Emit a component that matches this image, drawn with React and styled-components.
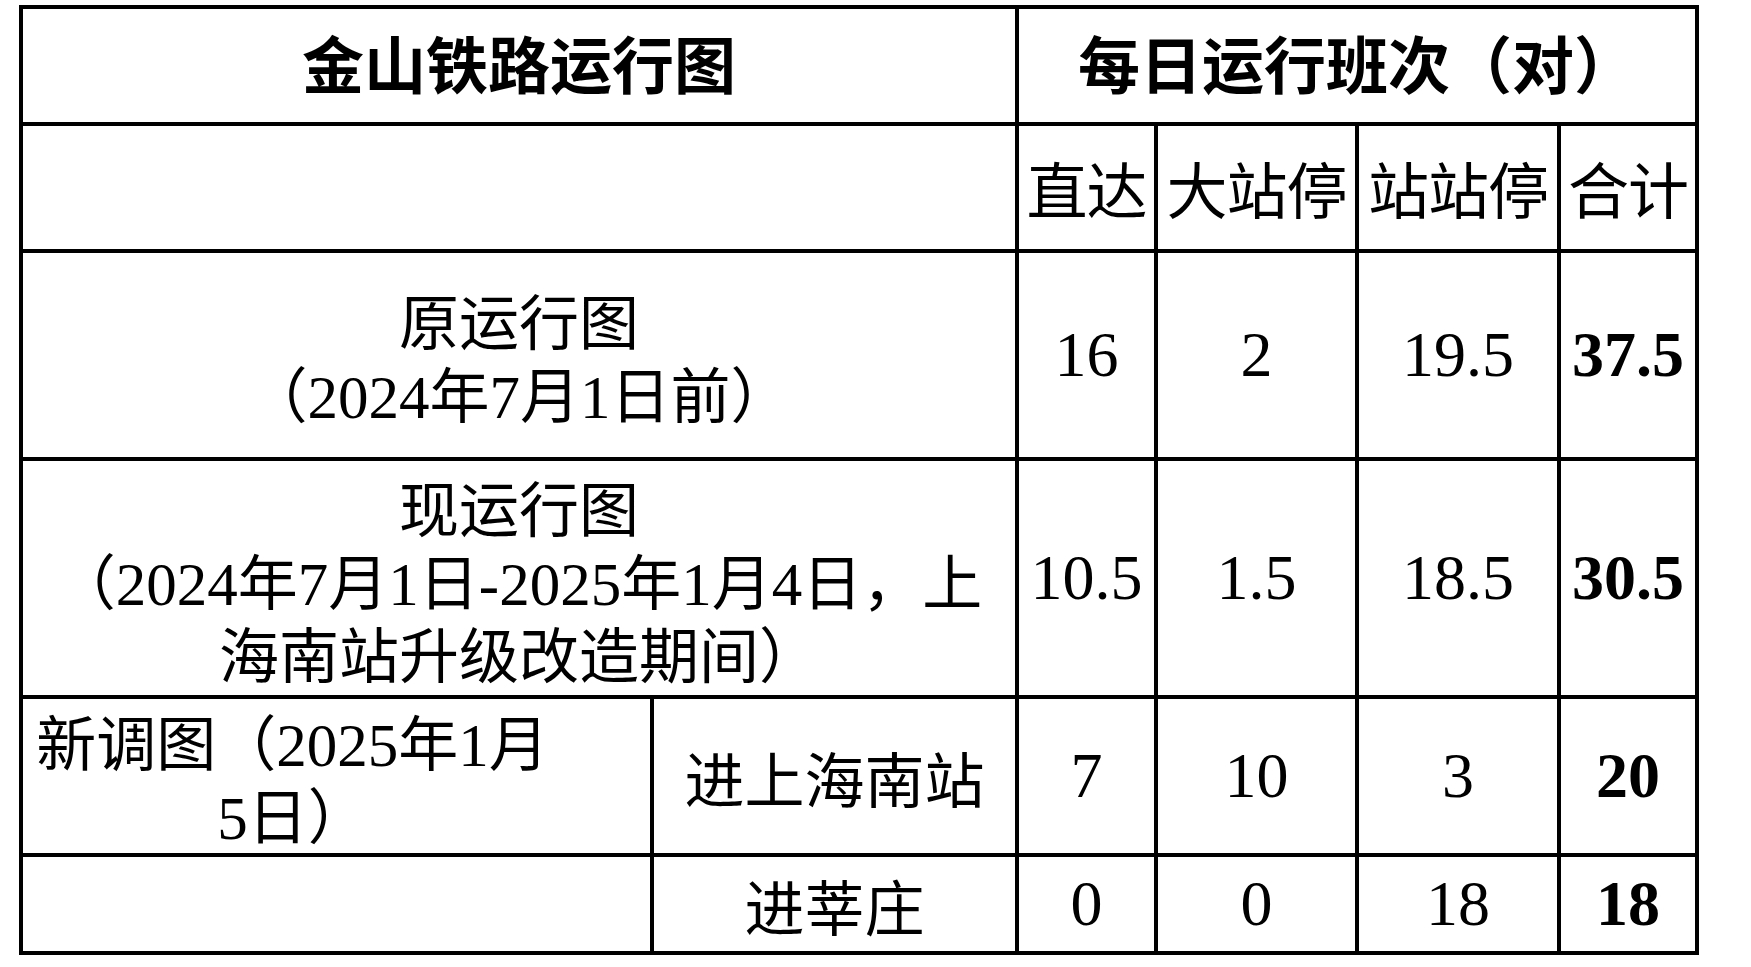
import React from 'react';
import styled, { createGlobalStyle } from 'styled-components';

const GlobalStyle = createGlobalStyle`
    html, body {
        margin: 0;
        padding: 0;
        background: #FFFFFF;
    }
`;

const columns = [631, 365, 139, 201, 202, 138];

const rows = [
    { label: ['原运行图', '（2024年7月1日前）'], values: ['16', '2', '19.5', '37.5'] },
    {
        label: ['现运行图', '（2024年7月1日-2025年1月4日，上', '海南站升级改造期间）'],
        values: ['10.5', '1.5', '18.5', '30.5'],
    },
];

// digits in the labels are set in a Times-like face, the rest in a CJK sans
const Mixed = ({ text }) =>
    text.split(/([0-9-]+)/).map((part, i) =>
        /^[0-9-]+$/.test(part) ? <Digits key={i}>{part}</Digits> : <React.Fragment key={i}>{part}</React.Fragment>
    );

const App = () => {
    return (
        <Page>
            <GlobalStyle />
            <Table>
                <colgroup>
                    {columns.map((w, i) => (
                        <col key={i} style={{ width: w }} />
                    ))}
                </colgroup>
                <tbody>
                    <Row $h={117}>
                        <TitleCell colSpan={2}>金山铁路运行图</TitleCell>
                        <TitleCell colSpan={4}>每日运行班次（对）</TitleCell>
                    </Row>
                    <Row $h={127}>
                        <Cell colSpan={2} />
                        <HeadCell>直达</HeadCell>
                        <HeadCell>大站停</HeadCell>
                        <HeadCell>站站停</HeadCell>
                        <HeadCell>合计</HeadCell>
                    </Row>
                    {rows.map((r, i) => (
                        <Row key={i} $h={i === 0 ? 208 : 238}>
                            <LabelCell colSpan={2}>
                                {r.label.map((line, j) => (
                                    <Line key={j}><Mixed text={line} /></Line>
                                ))}
                            </LabelCell>
                            {r.values.map((v, j) => (
                                <NumCell key={j} $bold={j === 3}>{v}</NumCell>
                            ))}
                        </Row>
                    ))}
                    <Row $h={158}>
                        <NewLabelCell>
                            <Line><Mixed text="新调图（2025年1月" /></Line>
                            <Line><Mixed text="5日）" /></Line>
                        </NewLabelCell>
                        <LabelCell>进上海南站</LabelCell>
                        <NumCell>7</NumCell>
                        <NumCell>10</NumCell>
                        <NumCell>3</NumCell>
                        <NumCell $bold>20</NumCell>
                    </Row>
                    <Row $h={98}>
                        <Cell />
                        <LabelCell>进莘庄</LabelCell>
                        <NumCell>0</NumCell>
                        <NumCell>0</NumCell>
                        <NumCell>18</NumCell>
                        <NumCell $bold>18</NumCell>
                    </Row>
                </tbody>
            </Table>
        </Page>
    );
};

const Page = styled.div`
    width: 1751px;
    height: 967px;
    padding: 5px 0 0 19px;
    box-sizing: border-box;
    overflow: hidden;
    background: #FFFFFF;
`;

const Table = styled.table`
    width: 1680px;
    border-collapse: collapse;
    table-layout: fixed;
    color: #000000;
`;

const Row = styled.tr`
    height: ${(p) => p.$h}px;
`;

const Cell = styled.td`
    border: 4px solid #000000;
    padding: 0;
    text-align: center;
    vertical-align: middle;
    white-space: nowrap;
`;

const TitleCell = styled(Cell)`
    font-family: "Noto Sans CJK SC", sans-serif;
    font-weight: 700;
    font-size: 62px;
    line-height: 1;
    padding-bottom: 8px;
`;

const HeadCell = styled(Cell)`
    font-family: "Noto Sans CJK SC", sans-serif;
    font-size: 61px;
    line-height: 1;
    letter-spacing: -1px;
`;

const LabelCell = styled(Cell)`
    font-family: "Noto Sans CJK SC", sans-serif;
    font-size: 60px;
    line-height: 73px;
`;

const NewLabelCell = styled(LabelCell)`
    padding: 0 100px 0 12px;
`;

const Line = styled.div`
    height: 73px;
    line-height: 73px;
    white-space: nowrap;
`;

const Digits = styled.span`
    font-family: "Liberation Serif", "Times New Roman", serif;
    font-size: 61px;
    line-height: 1;
`;

const NumCell = styled(Cell)`
    font-family: "Liberation Serif", "Times New Roman", serif;
    font-size: 64px;
    line-height: 1;
    font-weight: ${(p) => (p.$bold ? 700 : 400)};
`;

export default App;
